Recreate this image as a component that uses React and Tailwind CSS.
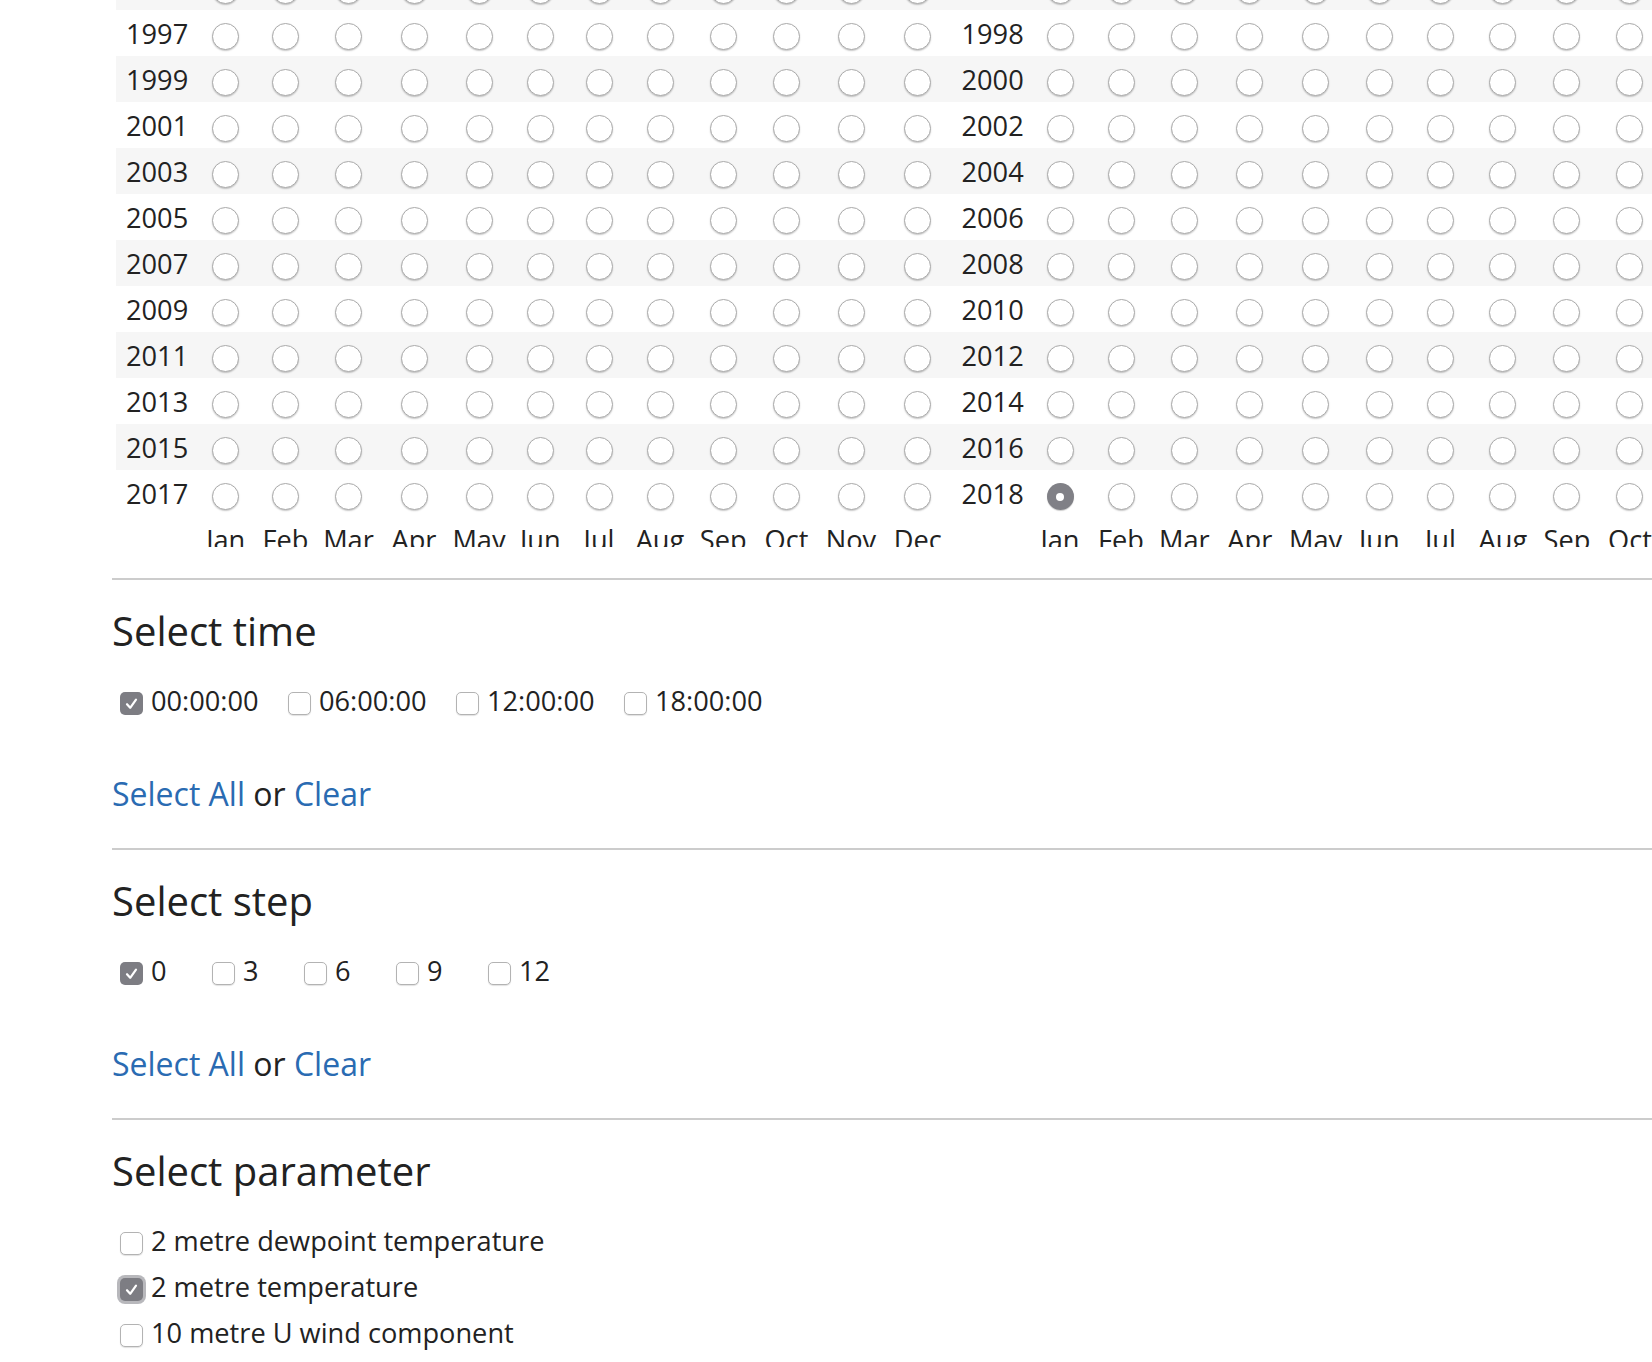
import React from "react";

const months = ["Jan", "Feb", "Mar", "Apr", "May", "Jun", "Jul", "Aug", "Sep", "Oct", "Nov", "Dec"];
const leftYears = [1995, 1997, 1999, 2001, 2003, 2005, 2007, 2009, 2011, 2013, 2015, 2017];
const rightYears = [1996, 1998, 2000, 2002, 2004, 2006, 2008, 2010, 2012, 2014, 2016, 2018];

const leftCols = [
  "w-[80.5px]",
  "w-[58.5px]",
  "w-[61px]",
  "w-[65px]",
  "w-[66px]",
  "w-[64px]",
  "w-[58.5px]",
  "w-[59px]",
  "w-[63px]",
  "w-[63.5px]",
  "w-[63px]",
  "w-[66px]",
  "w-[67.5px]",
];
const rightCols = [
  "w-[78.5px]",
  "w-[60px]",
  "w-[62px]",
  "w-[64.8px]",
  "w-[66px]",
  "w-[65.7px]",
  "w-[61.5px]",
  "w-[60.75px]",
  "w-[64.35px]",
  "w-[63.75px]",
  "w-[62.3px]",
  "w-[66px]",
  "w-[67.5px]",
];

function Radio({ checked }) {
  if (checked) {
    return (
      <span className="inline-flex h-[27px] w-[27px] items-center justify-center rounded-full bg-[#808086] align-middle shadow-[0_1px_1px_rgba(0,0,0,0.2)]">
        <span className="h-[8px] w-[8px] rounded-full bg-white" />
      </span>
    );
  }
  return (
    <span className="inline-block h-[27px] w-[27px] rounded-full border border-[#ababab] bg-white align-middle shadow-[0_1px_1.5px_rgba(0,0,0,0.22)]" />
  );
}

function Check({ checked, focus }) {
  if (checked) {
    return (
      <span
        className={
          "flex h-[23px] w-[23px] shrink-0 items-center justify-center rounded-[5px] bg-[#7d7d83] " +
          (focus ? "shadow-[0_0_0_3px_rgba(125,125,133,0.55)]" : "")
        }
      >
        <svg width="23" height="23" viewBox="0 0 23 23">
          <path d="M7 12.2 L10.2 15.8 L16 7.6" fill="none" stroke="white" strokeWidth="2.2" strokeLinecap="round" strokeLinejoin="round" />
        </svg>
      </span>
    );
  }
  return (
    <span className="block h-[23px] w-[23px] shrink-0 rounded-[5px] border border-[#b3b3b3] bg-white shadow-[0_1px_1px_rgba(0,0,0,0.12)]" />
  );
}

function YearTable({ years, selYear, cols, width }) {
  return (
    <table className={"shrink-0 table-fixed border-collapse " + width}>
      <colgroup>
        {cols.map((c, i) => (
          <col key={i} className={c} />
        ))}
      </colgroup>
      <tbody>
        {years.map((y, i) => (
          <tr key={y} className={i % 2 === 0 ? "bg-[#f6f6f6]" : "bg-white"}>
            <td className="whitespace-nowrap pl-[10px] pt-[2px] text-left leading-[44px]">{y}</td>
            {months.map((m, j) => (
              <td key={m} className="p-0 pt-[2px] text-center leading-[44px]">
                <Radio checked={y === selYear && j === 0} />
              </td>
            ))}
          </tr>
        ))}
        <tr className="bg-white">
          <td className="pt-[2px] leading-[44px]" />
          {months.map((m) => (
            <td key={m} className="whitespace-nowrap p-0 pt-[2px] text-center leading-[44px]">
              {m}
            </td>
          ))}
        </tr>
      </tbody>
    </table>
  );
}

function Links() {
  return (
    <p className="text-[32px] leading-[48px]">
      <a className="text-[#2a6bb2]">Select All</a> or <a className="text-[#2a6bb2]">Clear</a>
    </p>
  );
}

function Rule() {
  return <div className="h-[2px] bg-[#cccccc]" />;
}

function Heading({ children }) {
  return <h3 className="mt-[29px] text-[40px] font-normal leading-[44px]">{children}</h3>;
}

function Item({ label, checked, width, focus }) {
  return (
    <label className={"flex items-center leading-[46px] " + width}>
      <span className="ml-[8px] mr-[8px] mt-[5px]">
        <Check checked={checked} focus={focus} />
      </span>
      <span className="whitespace-nowrap">{label}</span>
    </label>
  );
}

export default function App() {
  return (
    <div className="w-full overflow-hidden bg-white pl-[112px] font-['Open_Sans',sans-serif] text-[27.2px] text-[#222222]">
      <div className="h-[547px] overflow-hidden">
        <div className="-mt-[36px] ml-[4px] flex">
          <YearTable years={leftYears} selYear={null} cols={leftCols} width="w-[835.5px]" />
          <YearTable years={rightYears} selYear={2018} cols={rightCols} width="w-[843.15px]" />
        </div>
      </div>

      <div className="mt-[31px]">
        <Rule />
        <Heading>Select time</Heading>
        <div className="mt-[25px] flex">
          <Item label="00:00:00" checked width="w-[168px]" />
          <Item label="06:00:00" width="w-[168px]" />
          <Item label="12:00:00" width="w-[168px]" />
          <Item label="18:00:00" width="w-[168px]" />
        </div>
        <div className="mt-[46px]">
          <Links />
        </div>
        <div className="h-[30px]" />

        <Rule />
        <Heading>Select step</Heading>
        <div className="mt-[25px] flex">
          <Item label="0" checked width="w-[92px]" />
          <Item label="3" width="w-[92px]" />
          <Item label="6" width="w-[92px]" />
          <Item label="9" width="w-[92px]" />
          <Item label="12" width="w-[92px]" />
        </div>
        <div className="mt-[46px]">
          <Links />
        </div>
        <div className="h-[30px]" />

        <Rule />
        <Heading>Select parameter</Heading>
        <div className="mt-[25px] flex flex-col">
          <Item label="2 metre dewpoint temperature" />
          <Item label="2 metre temperature" checked focus />
          <Item label="10 metre U wind component" />
        </div>
      </div>
    </div>
  );
}
